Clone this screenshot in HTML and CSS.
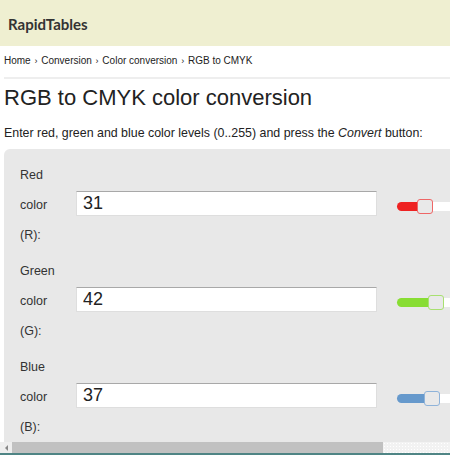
FILE: index.html
```html
<!DOCTYPE html>
<html lang="en">
<head>
<meta charset="utf-8">
<title>RGB to CMYK color conversion</title>
<link rel="stylesheet" href="styles.css">
</head>
<body>
<div class="page">
  <header class="header"><span class="logo">RapidTables</span></header>
  <nav class="crumbs">Home <span class="sep">›</span> Conversion <span class="sep">›</span> Color conversion <span class="sep">›</span> RGB to CMYK</nav>
  <div class="rule"></div>
  <h1 class="title">RGB to CMYK color conversion</h1>
  <p class="intro">Enter red, green and blue color levels (0..255) and press the <em>Convert</em> button:</p>
  <div class="panel">
    <div class="row">
      <label class="lbl">Red color (R):</label>
      <input class="field" type="text" value="31">
      <div class="slider red">
        <div class="fill" style="width:20px"></div><div class="thumb"></div><div class="rest"></div>
      </div>
    </div>
    <div class="row">
      <label class="lbl">Green color (G):</label>
      <input class="field" type="text" value="42">
      <div class="slider green">
        <div class="fill" style="width:31px"></div><div class="thumb"></div><div class="rest"></div>
      </div>
    </div>
    <div class="row">
      <label class="lbl">Blue color (B):</label>
      <input class="field" type="text" value="37">
      <div class="slider blue">
        <div class="fill" style="width:27px"></div><div class="thumb"></div><div class="rest"></div>
      </div>
    </div>
  </div>
  <div class="hscroll">
    <div class="arrow"></div>
    <div class="sthumb"></div>
    <div class="strack"></div>
  </div>
  <div class="bottomline"></div>
</div>
</body>
</html>
```
FILE: styles.css
```css
html, body {
  margin: 0;
  padding: 0;
  background: #fff;
}
body {
  font-family: "Liberation Sans", Arial, sans-serif;
  color: #333;
  width: 450px;
  height: 455px;
  overflow: hidden;
}
.page {
  display: flex;
  flex-direction: column;
  height: 455px;
  overflow: hidden;
}
.header {
  flex: 0 0 46px;
  background: #efefd1;
  display: flex;
  align-items: center;
  padding-left: 8px;
}
.logo {
  font-family: Lato, "Open Sans", sans-serif;
  font-weight: 700;
  font-size: 15px;
  color: #333;
  padding-top: 1px;
}
.crumbs {
  font-size: 10px;
  line-height: 13px;
  margin: 8px 0 0 4px;
  color: #222;
  white-space: nowrap;
}
.sep {
  font-size: 9px;
  padding: 0 1px;
}
.rule {
  flex: 0 0 auto;
  border-top: 2px solid #eeeeee;
  margin: 9px 0 0 4px;
}
.title {
  font-size: 22px;
  font-weight: normal;
  line-height: 28px;
  margin: 5px 0 0 4px;
  color: #222;
  white-space: nowrap;
}
.intro {
  font-size: 12.4px;
  line-height: 16px;
  margin: 13px 0 0 4px;
  color: #222;
  white-space: nowrap;
}
.panel {
  flex: 1 1 auto;
  min-height: 0;
  overflow: hidden;
  margin: 8px 0 0 4px;
  width: 520px;
  background: #e8e8e8;
  border-radius: 6px 0 0 0;
  padding: 11px 0 0 16px;
  box-sizing: border-box;
}
.row {
  display: flex;
  align-items: center;
  height: 90px;
  margin-bottom: 6px;
}
.lbl {
  width: 42px;
  margin-right: 14px;
  font-size: 12.5px;
  line-height: 30px;
  color: #333;
}
.field {
  width: 301px;
  height: 25px;
  box-sizing: border-box;
  margin: 0 0 3px 0;
  border: 1px solid #dedede;
  border-top-color: #a8a8a8;
  background: #fff;
  font-family: "Liberation Sans", Arial, sans-serif;
  font-size: 18px;
  color: #222;
  padding: 0 0 0 6px;
  outline: none;
}
.slider {
  display: flex;
  align-items: center;
  width: 120px;
  height: 9px;
  margin-left: 20px;
  margin-top: 2px;
}
.fill {
  height: 9px;
  border-radius: 5px 0 0 5px;
}
.thumb {
  flex: 0 0 auto;
  width: 16px;
  height: 15px;
  box-sizing: border-box;
  border-radius: 3px;
  background: #e9e9e9;
  border: 1px solid #ccc;
}
.rest {
  flex: 1 1 auto;
  height: 9px;
  background: #fff;
}
.red .fill { background: #ee2222; }
.red .thumb { border-color: #ee6666; }
.green .fill { background: #88dd33; }
.green .thumb { border-color: #a8e070; }
.blue .fill { background: #6699cc; }
.blue .thumb { border-color: #8fb3d9; }
.hscroll {
  flex: 0 0 11px;
  display: flex;
  background: #f3f3f3;
}
.arrow {
  flex: 0 0 12px;
  background: #eeeeee;
  display: flex;
  align-items: center;
  justify-content: center;
}
.arrow::before {
  content: "";
  width: 0;
  height: 0;
  border-top: 3px solid transparent;
  border-bottom: 3px solid transparent;
  border-right: 3px solid #888;
}
.sthumb {
  flex: 0 0 371px;
  background: #c1c1c1;
}
.strack {
  flex: 1 1 auto;
  background-color: #f2f2f2;
  background-image: radial-gradient(circle, #fff 0.8px, transparent 1px);
  background-size: 3px 3px;
}
.bottomline {
  flex: 0 0 2px;
  background: #4f8585;
}
```
